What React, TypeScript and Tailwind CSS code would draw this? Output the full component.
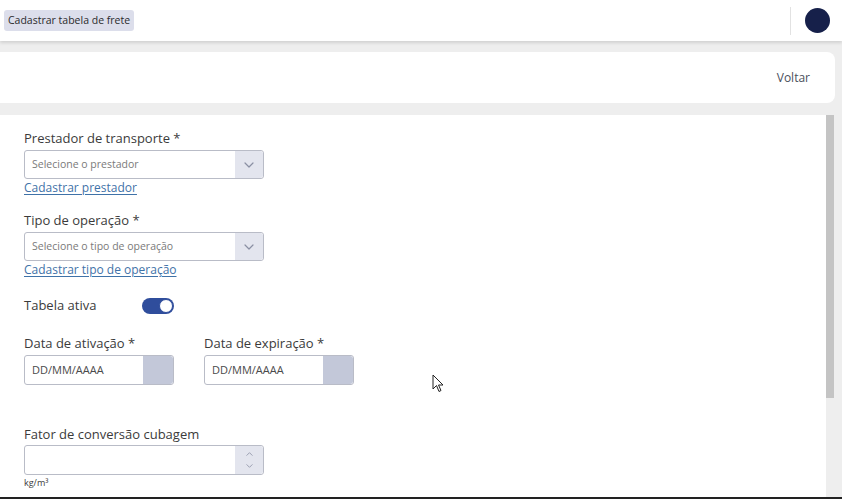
import React from "react";

const font = { fontFamily: '"Open Sans", "Noto Sans", sans-serif' };

function Chevron({ up = false, small = false }: { up?: boolean; small?: boolean }) {
  return (
    <svg
      width={small ? 7 : 10}
      height={small ? 4 : 6}
      viewBox="0 0 10 6"
      fill="none"
      className={up ? "rotate-180" : ""}
    >
      <path d="M1 1l4 4 4-4" stroke="#8a8fa3" strokeWidth="1.2" strokeLinecap="round" strokeLinejoin="round" />
    </svg>
  );
}

function SelectField({ label, placeholder, link }: { label: string; placeholder: string; link: string }) {
  return (
    <div className="flex flex-col">
      <span className="text-[13px] leading-[18px] text-[#3b3b3b]">{label}</span>
      <div className="mt-[3px] flex h-[29px] w-[240px] items-center rounded-[3px] border border-[#b9bcc7] bg-white">
        <span className="flex-1 pl-[7px] text-[10.5px] text-[#7a7a7a]">{placeholder}</span>
        <div className="flex h-full w-[28px] items-center justify-center rounded-r-[3px] bg-[#e3e5ee]">
          <Chevron />
        </div>
      </div>
      <a className="mt-[1px] text-[12px] leading-[16px] text-[#3f72a8] underline underline-offset-2">{link}</a>
    </div>
  );
}

function DateField({ label }: { label: string }) {
  return (
    <div className="flex flex-col">
      <span className="text-[13px] leading-[18px] text-[#3b3b3b]">{label}</span>
      <div className="mt-[3px] flex h-[30px] w-[150px] items-center rounded-[3px] border border-[#b9bcc7] bg-white">
        <span className="flex-1 pl-[7px] text-[11px] text-[#4a4a4a]">DD/MM/AAAA</span>
        <div className="h-full w-[30px] rounded-r-[3px] bg-[#c3c8d9]" />
      </div>
    </div>
  );
}

export default function App() {
  return (
    <div className="relative h-[499px] w-[842px] overflow-hidden bg-[#eeeeee]" style={font}>
      {/* top bar */}
      <header className="flex h-[41px] items-center justify-between bg-white pl-[4px] pr-[12px] shadow-[0_2px_3px_rgba(0,0,0,0.12)]">
        <span className="rounded-[3px] bg-[#dcdeeb] px-[4px] py-[3px] text-[10.5px] text-[#2b2b2b]">Cadastrar tabela de frete</span>
        <div className="flex items-center">
          <div className="mr-[14px] h-[28px] w-px bg-[#e2e2e2]" />
          <div className="h-[25px] w-[25px] rounded-full bg-[#16204a]" />
        </div>
      </header>

      {/* back card */}
      <div className="mt-[11px] mr-[7px] flex h-[51px] items-center justify-end rounded-r-[8px] bg-white pr-[25px]">
        <span className="text-[12px] text-[#4a4f5c]">Voltar</span>
      </div>

      {/* form card */}
      <div className="mt-[12px] mr-[7px] flex h-[400px] bg-white">
        <div className="flex flex-1 flex-col pl-[24px] pt-[14px]">
          <SelectField label="Prestador de transporte *" placeholder="Selecione o prestador" link="Cadastrar prestador" />
          <div className="mt-[15px]">
            <SelectField label="Tipo de operação *" placeholder="Selecione o tipo de operação" link="Cadastrar tipo de operação" />
          </div>

          <div className="mt-[20px] flex h-[16px] items-center">
            <span className="w-[118px] text-[13px] text-[#3b3b3b]">Tabela ativa</span>
            <div className="flex h-[16px] w-[32px] items-center justify-end rounded-full bg-[#2f4d9c] pr-[1px]">
              <div className="h-[14px] w-[14px] rounded-full border border-[#2f4d9c] bg-white" />
            </div>
          </div>

          <div className="mt-[20px] flex gap-[30px]">
            <DateField label="Data de ativação *" />
            <DateField label="Data de expiração *" />
          </div>

          <div className="mt-[40px] flex flex-col">
            <span className="text-[13px] leading-[18px] text-[#3b3b3b]">Fator de conversão cubagem</span>
            <div className="mt-[2px] flex h-[30px] w-[240px] items-center rounded-[3px] border border-[#b9bcc7] bg-white">
              <span className="flex-1" />
              <div className="flex h-full w-[28px] flex-col items-center justify-center gap-[8px] rounded-r-[3px] bg-[#e3e5ee]">
                <Chevron up small />
                <Chevron small />
              </div>
            </div>
            <span className="mt-[2px] text-[9px] leading-[12px] text-[#3b3b3b]">kg/m³</span>
          </div>
        </div>

        {/* scrollbar */}
        <div className="w-[9px] bg-[#eeeeee]">
          <div className="h-[283px] w-[8px] bg-[#c4c4c4]" />
        </div>
      </div>

      {/* mouse cursor */}
      <svg className="absolute left-[432px] top-[374px]" width="12" height="19" viewBox="0 0 12 19">
        <path d="M1 1v14l3.5-3.5 2.5 6 2-1-2.5-5.5H11z" fill="white" stroke="#222" strokeWidth="1" strokeLinejoin="round" />
      </svg>

      <div className="absolute bottom-0 left-0 h-[2px] w-full bg-[#222]" />
    </div>
  );
}
